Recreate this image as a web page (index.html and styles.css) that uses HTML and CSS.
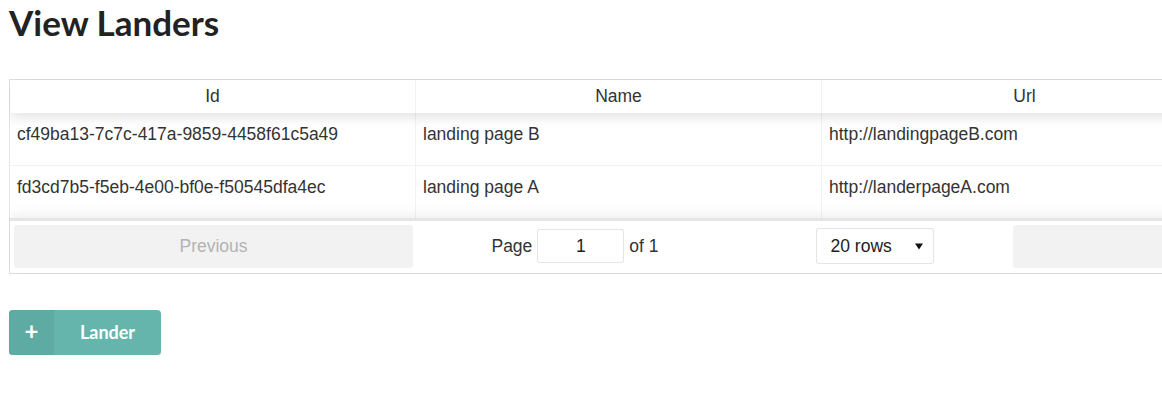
FILE: index.html
```html
<!DOCTYPE html>
<html>
<head>
<meta charset="utf-8">
<title>View Landers</title>
<link rel="stylesheet" href="styles.css">
</head>
<body>
<div class="page">
  <h1 class="title">View Landers</h1>
  <div class="table-wrap">
    <div class="table">
      <div class="thead">
        <div class="th">Id</div>
        <div class="th">Name</div>
        <div class="th">Url</div>
      </div>
      <div class="tbody">
        <div class="tr">
          <div class="td">cf49ba13-7c7c-417a-9859-4458f61c5a49</div>
          <div class="td">landing page B</div>
          <div class="td">http://landingpageB.com</div>
        </div>
        <div class="tr">
          <div class="td">fd3cd7b5-f5eb-4e00-bf0e-f50545dfa4ec</div>
          <div class="td">landing page A</div>
          <div class="td">http://landerpageA.com</div>
        </div>
      </div>
      <div class="pagination">
        <div class="pg-side"><button class="pg-btn" disabled>Previous</button></div>
        <div class="pg-center">
          <span class="pg-info">Page <input class="pg-input" type="text" value="1"> of 1</span>
          <span class="pg-select-wrap">
            <select class="pg-select"><option>20 rows</option></select>
            <svg class="pg-arrow" width="8" height="8" viewBox="0 0 8 8"><path d="M0 1.5 L8 1.5 L4 7.5 Z" fill="#111"/></svg>
          </span>
        </div>
        <div class="pg-side"><button class="pg-btn" disabled>Next</button></div>
      </div>
    </div>
  </div>
  <button class="add-btn"><span class="add-plus">+</span><span class="add-label">Lander</span></button>
</div>
</body>
</html>
```

FILE: styles.css
```css
html, body {
  margin: 0;
  padding: 0;
  background: #fff;
}
body {
  font-family: "Liberation Sans", Arial, sans-serif;
  color: #333;
  overflow: hidden;
}
.page {
  padding: 0 0 0 9px;
}
.title {
  font-family: Lato, "Liberation Sans", sans-serif;
  font-weight: 700;
  font-size: 35px;
  line-height: 40px;
  color: #222;
  margin: 0;
  padding-top: 2px;
  height: 79px;
  box-sizing: border-box;
}
.table-wrap {
  overflow: hidden;
}
.table {
  width: 1407px;
  border: 1px solid rgba(0,0,0,0.1);
  display: flex;
  flex-direction: column;
  font-size: 17.5px;
}
.thead {
  display: flex;
  height: 33px;
  box-shadow: 0 2px 15px 0 rgba(0,0,0,0.15);
  position: relative;
  z-index: 1;
}
.th {
  width: 406px;
  box-sizing: border-box;
  border-right: 1px solid rgba(0,0,0,0.05);
  text-align: center;
  padding-top: 6px;
  color: #333;
}
.tbody {
  display: flex;
  flex-direction: column;
}
.tr {
  display: flex;
  height: 53px;
  border-bottom: 1px solid rgba(0,0,0,0.05);
  box-sizing: border-box;
}
.tr:last-child {
  border-bottom: 0;
  height: 52px;
}
.td {
  width: 406px;
  box-sizing: border-box;
  border-right: 1px solid rgba(0,0,0,0.05);
  padding: 11px 7px 0;
  color: #333;
}
.pagination {
  display: flex;
  padding: 3px;
  border-top: 3px solid rgba(0,0,0,0.1);
  box-shadow: 0 0 15px 0 rgba(0,0,0,0.1);
  height: 55px;
  box-sizing: border-box;
  position: relative;
  z-index: 1;
  background: #fff;
}
.pg-side {
  width: 400px;
  display: flex;
}
.pg-btn {
  width: 100%;
  margin: 1px 0 2px 1px;
  border: 0;
  border-radius: 3px;
  background: #f2f2f2;
  color: #b3b3b3;
  font-family: "Liberation Sans", Arial, sans-serif;
  font-size: 17.5px;
  padding: 0;
}
.pg-center {
  width: 599px;
  display: flex;
  align-items: center;
  justify-content: space-around;
  padding-bottom: 2px;
}
.pg-info {
  display: flex;
  align-items: center;
  gap: 4px;
  white-space: nowrap;
}
.pg-input {
  width: 87px;
  height: 34px;
  box-sizing: border-box;
  border: 1px solid rgba(0,0,0,0.1);
  border-radius: 3px;
  text-align: center;
  font-family: "Liberation Sans", Arial, sans-serif;
  font-size: 17.5px;
  color: #222;
  padding: 0;
  margin: 0 1px;
  outline: none;
}
.pg-select-wrap {
  position: relative;
  display: inline-flex;
}
.pg-select {
  -webkit-appearance: none;
  appearance: none;
  width: 118px;
  height: 36px;
  box-sizing: border-box;
  border: 1px solid rgba(0,0,0,0.1);
  border-radius: 3px;
  background: #fff;
  font-family: "Liberation Sans", Arial, sans-serif;
  font-size: 17.5px;
  color: #222;
  padding: 0 0 0 14px;
  outline: none;
}
.pg-arrow {
  position: absolute;
  right: 11px;
  top: 14px;
  pointer-events: none;
}
.add-btn {
  margin-top: 36px;
  display: flex;
  width: 152px;
  height: 45px;
  padding: 0;
  border: 0;
  border-radius: 4px;
  overflow: hidden;
  background: #66b5ad;
  color: #fff;
  font-family: Lato, "Liberation Sans", sans-serif;
  font-weight: 700;
  font-size: 18px;
  box-shadow: 0 1px 1px rgba(0,0,0,0.12);
}
.add-plus {
  width: 45px;
  height: 100%;
  background: #5eaba3;
  display: flex;
  align-items: center;
  justify-content: center;
  font-size: 24px;
  padding-bottom: 4px;
  box-sizing: border-box;
}
.add-label {
  flex: 1;
  display: flex;
  align-items: center;
  justify-content: center;
  padding-bottom: 2px;
}
```
